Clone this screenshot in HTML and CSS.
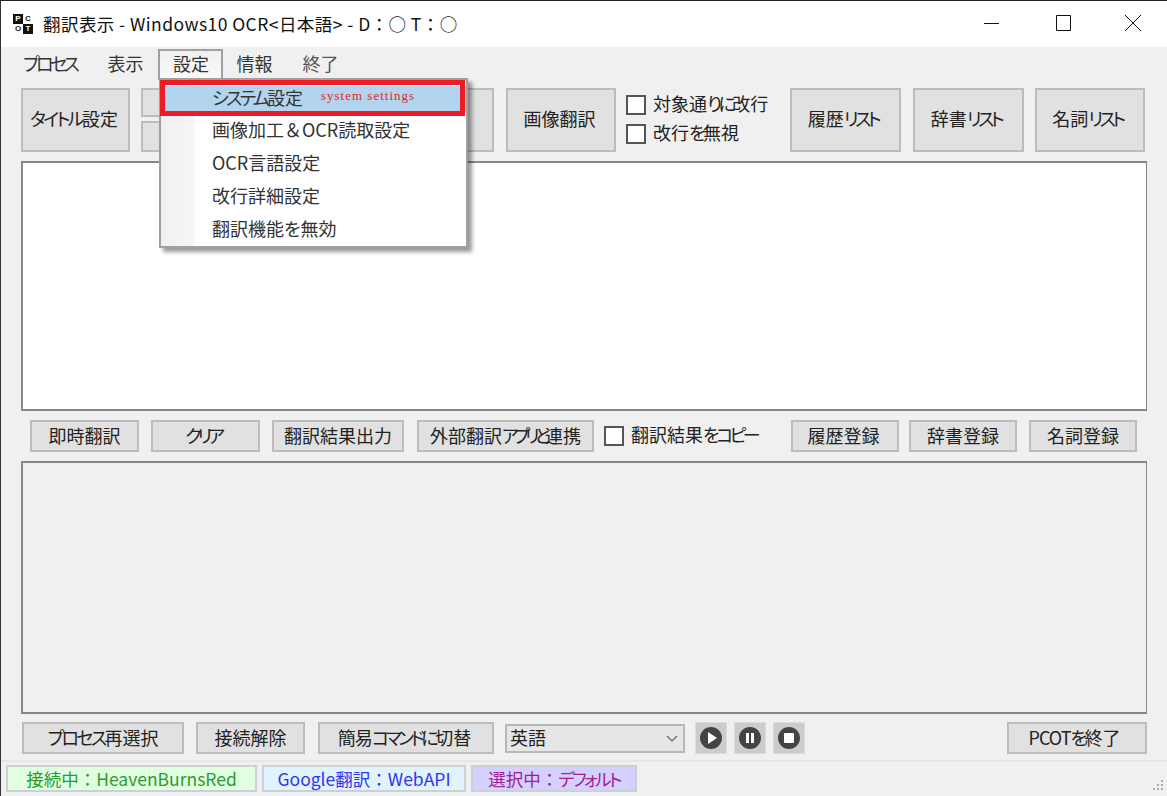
FILE: index.html
```html
<!DOCTYPE html>
<html lang="ja">
<head>
<meta charset="utf-8">
<title>翻訳表示</title>
<link rel="stylesheet" href="styles.css">
</head>
<body>
<div class="window">
  <header class="titlebar">
    <div class="logo"><span class="cell dark">P</span><span class="cell">C</span><span class="cell">O</span><span class="cell dark">T</span></div>
    <div class="title">翻訳表示 - Windows10 OCR&lt;日本語&gt; - D：○ T：○</div>
    <div class="caps">
      <svg class="cap" width="46" height="16" viewBox="0 0 46 16"><path d="M14 8.5h15" stroke="#111" fill="none"/></svg>
      <svg class="cap" width="46" height="16" viewBox="0 0 46 16"><path d="M16.5 .5h14v15h-14z" stroke="#111" fill="none"/></svg>
      <svg class="cap" width="46" height="16" viewBox="0 0 46 16"><path d="M15 0l16 16M31 0L15 16" stroke="#111" fill="none"/></svg>
    </div>
  </header>
  <main class="client">
    <nav class="menubar">
      <span class="mi mi1"><span class="k3">プロセス</span></span>
      <span class="mi mi2">表示</span>
      <span class="mi mi3 open">設定</span>
      <span class="mi mi4">情報</span>
      <span class="mi mi5">終了</span>
    </nav>
    <div class="menu">
      <div class="mitem hl"><span><span class="k">システム</span>設定</span></div>
      <div class="mitem"><span>画像加工<span class="full">＆</span>OCR読取設定</span></div>
      <div class="mitem"><span>OCR言語設定</span></div>
      <div class="mitem"><span>改行詳細設定</span></div>
      <div class="mitem"><span>翻訳機能を無効</span></div>
      <div class="redbox"><span class="redtext">system settings</span></div>
    </div>
    <section class="row toolbar">
      <button class="btn w109 shift"><span class="k">タイトル</span>設定</button>
      <div class="stack">
        <button class="btn s1"></button>
        <button class="btn s2"></button>
      </div>
      <button class="btn hidden-b"></button>
      <button class="btn w110 img shift">画像翻訳</button>
      <div class="checks">
        <label class="chk"><i class="box"></i>対象通<span class="k3">りに</span>改行</label>
        <label class="chk"><i class="box"></i>改行<span class="k">を</span>無視</label>
      </div>
      <button class="btn w111 l1 shift2">履歴<span class="k3">リスト</span></button>
      <button class="btn w111 l2 shift2">辞書<span class="k3">リスト</span></button>
      <button class="btn w110 l3 shift2">名詞<span class="k3">リスト</span></button>
    </section>
    <div class="textbox white"></div>
    <section class="row row2">
      <button class="btn r109">即時翻訳</button>
      <button class="btn r109 g12 shift2"><span class="k4">クリア</span></button>
      <button class="btn b132 g12">翻訳結果出力</button>
      <button class="btn b177 g13">外部翻訳<span class="k5">アプリと</span>連携</button>
      <label class="chk copy"><i class="box"></i>翻訳結果<span class="k3">をコピー</span></label>
      <button class="btn b108 h1 shift">履歴登録</button>
      <button class="btn b108 h2">辞書登録</button>
      <button class="btn b108 h3">名詞登録</button>
    </section>
    <div class="textbox gray"></div>
    <section class="row row3">
      <button class="btn b162"><span class="k">プロセス</span>再選択</button>
      <button class="btn b109 g12">接続解除</button>
      <button class="btn b176 g13 shift"><span class="tight">簡易</span><span class="k3">コマンドに</span>切替</button>
      <div class="combo">英語
        <svg class="chev" width="12" height="8" viewBox="0 0 12 8"><path d="M1 1l5 5 5-5" stroke="#666" stroke-width="1.2" fill="none"/></svg>
      </div>
      <button class="icon i1"><svg width="24" height="24" viewBox="0 0 24 24"><circle cx="12" cy="12" r="11" fill="#444"/><path d="M9 6l9 6-9 6z" fill="#fff"/></svg></button>
      <button class="icon i2"><svg width="24" height="24" viewBox="0 0 24 24"><circle cx="12" cy="12" r="11" fill="#444"/><path d="M8 7h3v10H8zM13 7h3v10h-3z" fill="#fff"/></svg></button>
      <button class="icon i3"><svg width="24" height="24" viewBox="0 0 24 24"><circle cx="12" cy="12" r="11" fill="#444"/><rect x="7" y="7" width="10" height="10" rx="1" fill="#fff"/></svg></button>
      <button class="btn b140 quit shift2"><span class="tight">PCOT</span><span class="k">を</span>終了</button>
    </section>
    <footer class="status">
      <span class="pill green">接続中：HeavenBurnsRed</span>
      <span class="pill blue">Google翻訳：WebAPI</span>
      <span class="pill purple">選択中：<span class="k">デフォルト</span></span>
      <svg class="grip" width="16" height="16" viewBox="0 0 16 16"><g fill="#aaa"><rect x="12" y="2" width="2" height="2"/><rect x="8" y="6" width="2" height="2"/><rect x="12" y="6" width="2" height="2"/><rect x="4" y="10" width="2" height="2"/><rect x="8" y="10" width="2" height="2"/><rect x="12" y="10" width="2" height="2"/></g></svg>
    </footer>
  </main>
</div>
</body>
</html>
```
FILE: styles.css
```css
* { box-sizing: border-box; }
html, body { margin: 0; padding: 0; height: 100%; overflow: hidden; }
body {
  font-family: "Noto Sans CJK JP", "Noto Sans", sans-serif;
  font-feature-settings: "palt";
  font-size: 18px;
  color: #222;
}
.k { letter-spacing: -2.6px; }
.k3 { letter-spacing: -3.5px; }
.k4 { letter-spacing: -4px; }
.k5 { letter-spacing: -5.2px; }
.tight { letter-spacing: -1px; }
.full { font-feature-settings: normal; }
.window {
  width: 1167px; height: 796px;
  border-top: 1px solid #222; border-left: 1px solid #333;
  display: flex; flex-direction: column;
  background: #f0f0f0;
}
.titlebar {
  height: 46px; flex: none; background: #fff;
  display: flex; align-items: center; padding-left: 12px;
  position: relative;
}
.logo {
  width: 20px; height: 20px; display: grid;
  grid-template-columns: 10px 10px; grid-template-rows: 10px 10px;
  margin-right: 10px; margin-top: -1px;
  font: bold 8px/10px "Liberation Sans", sans-serif;
  text-align: center;
}
.cell { color: #111; background: #fff; }
.cell.dark { background: #111; color: #fff; }
.title { font-size: 17.5px; letter-spacing: .44px; font-feature-settings: normal; color: #111; white-space: nowrap; line-height: 24px; margin-top: -1px; }
.caps { margin-left: auto; display: flex; margin-right: 11px; gap: 24px; margin-top: -2px; }
.cap { display: block; }

.client { flex: 1; position: relative; display: flex; flex-direction: column; padding-left: 20px; }
.menubar { height: 32px; margin-top: 1px; display: flex; align-items: center; margin-left: -20px; position: relative; flex: none; }
.mi { font-size: 18px; height: 24px; line-height: 22px; color: #333; white-space: nowrap; }
.mi1 { margin-left: 22px; }
.mi2 { margin-left: 31px; }
.mi3 { margin-left: 15px; padding: 0 12.5px; height: 31px; line-height: 25px; border: 2px solid #a0a0a0; border-bottom: 0; background: linear-gradient(#f0f0f0, #fafafa); }
.mi4 { margin-left: 13px; }
.mi5 { margin-left: 30px; color: #555; }

.menu {
  position: absolute; left: 158px; top: 31px; width: 309px; height: 170px;
  background: linear-gradient(90deg, #f0f0f0 0, #f6f6f6 33px, #fff 34px);
  border: 2px solid #a0a0a0;
  box-shadow: 4px 4px 4px rgba(0,0,0,.4);
  z-index: 5;
  padding-top: 3px;
}
.mitem { height: 33px; line-height: 27px; padding-left: 51px; font-size: 18px; color: #333; white-space: nowrap; }
.mitem.hl { background: #b3d4ee; height: 26px; line-height: 22px; margin: 3px 0 0 3px; padding-left: 48px; }
.mitem:nth-child(2) { margin-top: 4px; }
.redbox {
  position: absolute; left: -1px; top: 0; width: 305px; height: 36px;
  border: 5px solid #ed1c24;
}
.redtext {
  position: absolute; left: 156px; top: 2px;
  font: 13px/18px "Liberation Serif", serif; letter-spacing: 1px; color: #ed1c24;
}

.row { display: flex; flex: none; }
.btn {
  font: inherit; font-size: 18px; color: #222;
  background: #e1e1e1; border: 2px solid #bcbcbc; padding: 0 0 4px;
  white-space: nowrap; display: block;
}
.shift { padding-right: 3px; }
.shift2 { padding-right: 5px; }
.toolbar { height: 64px; margin-top: 8px; }
.w109 { width: 109px; }
.w110 { width: 110px; }
.w111 { width: 111px; }
.stack { display: flex; flex-direction: column; justify-content: space-between; margin-left: 11px; width: 100px; }
.s1 { height: 29px; }
.s2 { height: 31px; }
.hidden-b { margin-left: 133px; width: 120px; }
.img { margin-left: 12px; }
.checks { display: flex; flex-direction: column; justify-content: center; gap: 7px; margin: -2px 0 0 10px; width: 164px; }
.chk { display: flex; align-items: flex-start; height: 22px; font-size: 18px; line-height: 19px; color: #222; white-space: nowrap; }
.row2 .chk { align-self: center; }
.box { width: 20px; height: 20px; margin-top: 1px; border: 2px solid #555; background: #fff; margin-right: 7px; display: block; flex: none; }
.l2 { margin-left: 12px; }
.l3 { margin-left: 11px; }

.textbox { width: 1126px; flex: none; border: 2px solid #888; border-right-width: 1px; }
.white { height: 250px; margin-top: 9px; background: #fff; }
.gray { height: 253px; margin-top: 9px; background: #f0f0f0; }

.row2 { height: 32px; margin-top: 9px; margin-left: 9px; }
.r109, .b109 { width: 109px; }
.b132 { width: 132px; }
.b177 { width: 177px; }
.b108 { width: 108px; }
.g12 { margin-left: 12px; }
.g13 { margin-left: 13px; }
.copy { margin-left: 10px; width: 187px; }
.h2 { margin-left: 10px; }
.h3 { margin-left: 12px; }

.row3 { height: 32px; margin-top: 8px; margin-left: 1px; align-items: stretch; }
.b162 { width: 162px; }
.b176 { width: 176px; }
.b140 { width: 140px; }
.combo {
  width: 180px; margin: 2px 0 1px 11px; background: #e6e6e6; border: 2px solid #b8b8b8;
  padding-left: 3px; font-size: 18px; line-height: 23px; position: relative; color: #222;
}
.chev { position: absolute; right: 5px; top: 9px; }
.icon { width: 32px; background: #ccc; border: 1px solid #ddd; padding: 0; display: flex; align-items: center; justify-content: center; }
.i1 { margin-left: 10px; }
.i2, .i3 { margin-left: 7px; }
.quit { margin-left: auto; margin-right: 20px; }

.status {
  margin: 6px 0 0 -20px; border-top: 2px solid #e6e6e6;
  flex: 1; display: flex; align-items: flex-start; padding: 3px 0 0 5px; gap: 5px; position: relative;
}
.pill { height: 27px; border: 2px solid #c8d0d8; font-size: 17.5px; line-height: 24px; font-feature-settings: normal; text-align: center; white-space: nowrap; }
.pill .k { font-feature-settings: "palt"; }
.green { width: 251px; background: #e0ffe0; color: #2e9a2e; }
.blue { width: 204px; background: #e0f4ff; color: #3333ee; }
.purple { width: 166px; background: #d4d0ff; color: #a02090; }
.grip { position: absolute; right: 2px; bottom: 2px; }
```
